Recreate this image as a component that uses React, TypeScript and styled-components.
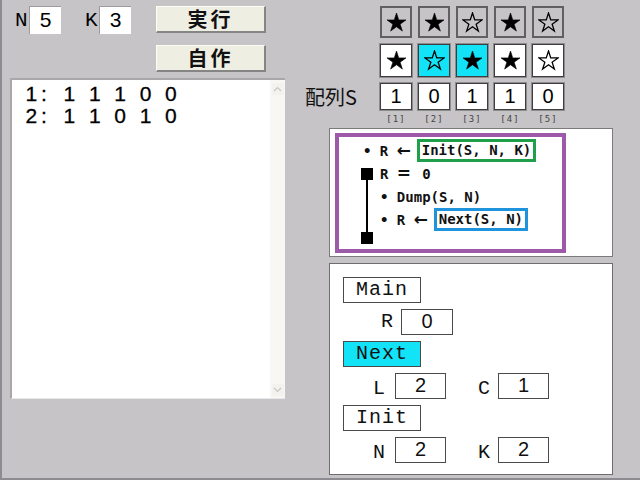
import React, { FC } from "react";
import styled, { createGlobalStyle } from "styled-components";

const GlobalStyle = createGlobalStyle`
  html, body {
    margin: 0;
    padding: 0;
    background: #c6c4c7;
  }
  * {
    box-sizing: border-box;
  }
`;

const UI = `"Liberation Mono", "DejaVu Sans Mono", monospace`;
const DIGITS = `"Liberation Sans", Arial, sans-serif`;
const CODE = `"DejaVu Sans Mono", "Liberation Mono", monospace`;
const JP = `"Noto Sans CJK JP", "Noto Sans", sans-serif`;

const starRow1 = [true, true, false, true, false];
const starRow2 = [true, false, true, true, false];
const cyanRow2 = [false, true, true, false, false];
const values = [1, 0, 1, 1, 0];
const output = ["1: 1 1 1 0 0", "2: 1 1 0 1 0"];

const Star: FC<{ filled: boolean }> = ({ filled }) => (
  <svg width="21" height="21" viewBox="-0.5 -0.5 21 21">
    <polygon
      points="10,0.5 12.25,7.41 19.51,7.41 13.63,11.68 15.88,18.59 10,14.32 4.12,18.59 6.37,11.68 0.49,7.41 7.75,7.41"
      fill={filled ? "#000" : "none"}
      stroke="#000"
      strokeWidth={filled ? 0.6 : 1.3}
      strokeLinejoin="miter"
    />
  </svg>
);

const Chevron: FC<{ up?: boolean }> = ({ up }) => (
  <svg width="9" height="6" viewBox="0 0 9 6">
    <path
      d={up ? "M1 5 L4.5 1.5 L8 5" : "M1 1 L4.5 4.5 L8 1"}
      fill="none"
      stroke="#c9c7c2"
      strokeWidth="1.2"
    />
  </svg>
);

const App: FC = () => {
  return (
    <>
      <GlobalStyle />
      <Frame>
        <LeftColumn>
          <Controls>
            <Params>
              <ParamLabel>N</ParamLabel>
              <ParamBox>5</ParamBox>
              <ParamLabel $spaced>K</ParamLabel>
              <ParamBox>3</ParamBox>
            </Params>
            <Buttons>
              <ActionButton>実行</ActionButton>
              <ActionButton>自作</ActionButton>
            </Buttons>
          </Controls>
          <OutputArea>
            <OutputText>
              {output.map((line) => (
                <OutputLine key={line}>
                  {line.split("").map((ch, i) => (
                    <OutputChar key={i}>{ch}</OutputChar>
                  ))}
                </OutputLine>
              ))}
            </OutputText>
            <ScrollBar>
              <ScrollArrow>
                <Chevron up />
              </ScrollArrow>
              <ScrollArrow>
                <Chevron />
              </ScrollArrow>
            </ScrollBar>
          </OutputArea>
        </LeftColumn>

        <RightColumn>
          <ArrayGrid>
            <span />
            {starRow1.map((filled, i) => (
              <StarCell key={`a${i}`} $row={1}>
                <Star filled={filled} />
              </StarCell>
            ))}
            <span />
            {starRow2.map((filled, i) => (
              <StarCell key={`b${i}`} $row={2} $cyan={cyanRow2[i]}>
                <Star filled={filled} />
              </StarCell>
            ))}
            <ArrayLabel>配列S</ArrayLabel>
            {values.map((v, i) => (
              <ValueCell key={`c${i}`}>{v}</ValueCell>
            ))}
            <span />
            {values.map((_, i) => (
              <IndexLabel key={`d${i}`}>[{i + 1}]</IndexLabel>
            ))}
          </ArrayGrid>

          <CodePanel>
            <Algorithm>
              <CodeLine $indent={24}>
                {"• R "}
                <Arrow>←</Arrow>
                <Mark $color="#21a04b">Init(S, N, K)</Mark>
              </CodeLine>
              <Loop>
                <Bracket>
                  <BracketEnd />
                  <BracketLine />
                  <BracketEnd />
                </Bracket>
                <LoopBody>
                  <CodeLine>
                    {"R "}
                    <Arrow>=</Arrow>
                    {" 0"}
                  </CodeLine>
                  <CodeLine>{"• Dump(S, N)"}</CodeLine>
                  <CodeLine>
                    {"• R "}
                    <Arrow>←</Arrow>
                    <Mark $color="#1f93dc">Next(S, N)</Mark>
                  </CodeLine>
                </LoopBody>
              </Loop>
            </Algorithm>
          </CodePanel>

          <VarPanel>
            <FuncName>Main</FuncName>
            <VarRow $indent={38}>
              <VarLabel $width={20}>R</VarLabel>
              <VarBox $width={52}>0</VarBox>
            </VarRow>
            <FuncName $active>Next</FuncName>
            <VarRow $indent={30} $low>
              <VarLabel $width={22}>L</VarLabel>
              <VarBox $width={51}>2</VarBox>
              <VarLabel $width={20} $gap={32}>
                C
              </VarLabel>
              <VarBox $width={51}>1</VarBox>
            </VarRow>
            <FuncName>Init</FuncName>
            <VarRow $indent={30} $low>
              <VarLabel $width={22}>N</VarLabel>
              <VarBox $width={51}>2</VarBox>
              <VarLabel $width={20} $gap={32}>
                K
              </VarLabel>
              <VarBox $width={51}>2</VarBox>
            </VarRow>
          </VarPanel>
        </RightColumn>
      </Frame>
    </>
  );
};

export default App;

const Frame = styled.div`
  display: flex;
  width: 640px;
  height: 480px;
  background: #c6c4c7;
  border-left: 2px solid #8d8b8f;
  border-bottom: 2px solid #8d8b8f;
  overflow: hidden;
`;

const LeftColumn = styled.div`
  width: 298px;
  padding: 6px 0 0 8px;
  display: flex;
  flex-direction: column;
`;

const Controls = styled.div`
  display: flex;
  align-items: flex-start;
`;

const Params = styled.div`
  display: flex;
  align-items: center;
  height: 28px;
  margin-left: 5px;
`;

const ParamLabel = styled.span<{ $spaced?: boolean }>`
  width: 12px;
  margin-right: 2px;
  margin-left: ${(p) => (p.$spaced ? "24px" : "0")};
  font-family: ${UI};
  font-size: 21px;
  color: #000;
`;

const ParamBox = styled.div`
  width: 32px;
  height: 28px;
  background: #fff;
  border-top: 1px solid #9c9c9c;
  border-left: 1px solid #9c9c9c;
  font-family: ${DIGITS};
  font-size: 21px;
  line-height: 26px;
  text-align: center;
  color: #000;
`;

const Buttons = styled.div`
  display: flex;
  flex-direction: column;
  gap: 12px;
  margin-left: 25px;
`;

const ActionButton = styled.div`
  width: 110px;
  height: 27px;
  background: #efeee2;
  border-top: 1px solid #fdfdf8;
  border-left: 1px solid #fdfdf8;
  border-right: 2px solid #858585;
  border-bottom: 2px solid #858585;
  font-family: ${JP};
  font-weight: 700;
  font-size: 20px;
  line-height: 24px;
  letter-spacing: 3px;
  text-align: center;
  color: #111;
`;

const OutputArea = styled.div`
  display: flex;
  width: 275px;
  height: 321px;
  margin-top: 6px;
  background: #fff;
  border-top: 2px solid #a9a7aa;
  border-left: 2px solid #a9a7aa;
  border-bottom: 1px solid #e8e7e9;
`;

const OutputText = styled.div`
  flex: 1;
  padding: 3px 0 0 13px;
`;

const OutputLine = styled.div`
  display: flex;
  height: 22px;
`;

const OutputChar = styled.span`
  width: 12.7px;
  font-family: ${DIGITS};
  font-size: 21px;
  line-height: 22px;
  text-align: center;
  white-space: pre;
  color: #000;
  -webkit-text-stroke: 0.3px #000;
`;

const ScrollBar = styled.div`
  width: 15px;
  display: flex;
  flex-direction: column;
  justify-content: space-between;
  align-items: center;
  padding: 3px 0 2px;
  background: #f8f7f3;
`;

const ScrollArrow = styled.div`
  width: 12px;
  height: 12px;
  display: flex;
  align-items: center;
  justify-content: center;
  background: #f3f2ee;
`;

const RightColumn = styled.div`
  flex: 1;
  display: flex;
  flex-direction: column;
  padding-top: 6px;
`;

const ArrayGrid = styled.div`
  display: grid;
  grid-template-columns: 74px repeat(5, 32px);
  grid-template-rows: 32px 33px 27px auto;
  column-gap: 6px;
  row-gap: 6px;
`;

const StarCell = styled.div<{ $row: number; $cyan?: boolean }>`
  display: flex;
  align-items: center;
  justify-content: center;
  background: ${(p) => (p.$cyan ? "#13e3f6" : p.$row === 1 ? "#c6c4c7" : "#fff")};
  border: ${(p) => (p.$row === 1 ? "2px solid #606060" : "1px solid #3e3e3e")};
  box-shadow: ${(p) => (p.$row === 1 ? "none" : "0 0 0 1px #8e8c8f")};
`;

const ArrayLabel = styled.div`
  align-self: center;
  padding-left: 5px;
  font-family: ${JP};
  font-size: 20px;
  line-height: 24px;
  color: #111;
`;

const ValueCell = styled.div`
  background: #fff;
  border: 1px solid #3e3e3e;
  box-shadow: 0 0 0 1px #8e8c8f;
  font-family: ${DIGITS};
  font-size: 20px;
  line-height: 25px;
  text-align: center;
  color: #000;
`;

const IndexLabel = styled.div`
  margin-top: -3px;
  font-family: ${CODE};
  font-size: 9px;
  line-height: 12px;
  letter-spacing: 1px;
  text-align: center;
  color: #444;
`;

const CodePanel = styled.div`
  width: 284px;
  height: 129px;
  margin: 3px 0 0 29px;
  padding: 4px 0 0 5px;
  background: #fff;
  border: 1px solid #7c7a7d;
`;

const Algorithm = styled.div`
  width: 231px;
  height: 120px;
  padding-top: 2px;
  border: 4px solid #9d5aa8;
`;

const CodeLine = styled.div<{ $indent?: number }>`
  display: flex;
  align-items: center;
  height: 23px;
  padding-left: ${(p) => p.$indent ?? 0}px;
  font-family: ${CODE};
  font-weight: 700;
  font-size: 14px;
  white-space: pre;
  color: #111;
`;

const Arrow = styled.span`
  display: inline-block;
  width: 17px;
  font-family: "DejaVu Sans", sans-serif;
  font-weight: 700;
  font-size: 17px;
  line-height: 17px;
`;

const Mark = styled.span<{ $color: string }>`
  margin-left: 3px;
  padding: 0 2px;
  line-height: 17px;
  border: 3px solid ${(p) => p.$color};
`;

const Loop = styled.div`
  display: flex;
  margin-left: 22px;
`;

const Bracket = styled.div`
  width: 12px;
  display: flex;
  flex-direction: column;
  align-items: center;
  padding-top: 6px;
`;

const BracketEnd = styled.div`
  width: 12px;
  height: 12px;
  flex-shrink: 0;
  background: #000;
`;

const BracketLine = styled.div`
  width: 2px;
  flex: 1;
  background: #000;
`;

const LoopBody = styled.div`
  margin-left: 7px;
  padding-bottom: 13px;
`;

const VarPanel = styled.div`
  width: 284px;
  height: 212px;
  margin: 6px 0 0 29px;
  padding: 13px 0 0 13px;
  display: flex;
  flex-direction: column;
  gap: 6px;
  background: #fff;
  border: 1px solid #6f6d70;
`;

const FuncName = styled.div<{ $active?: boolean }>`
  width: 78px;
  height: 26px;
  background: ${(p) => (p.$active ? "#13e3f6" : "#fff")};
  border: 1px solid #4a4a4a;
  font-family: ${UI};
  font-size: 20px;
  line-height: 24px;
  letter-spacing: 1px;
  text-align: center;
  color: #111;
`;

const VarRow = styled.div<{ $indent: number; $low?: boolean }>`
  display: flex;
  align-items: ${(p) => (p.$low ? "flex-end" : "center")};
  height: 26px;
  padding-left: ${(p) => p.$indent}px;
`;

const VarLabel = styled.span<{ $width: number; $gap?: number }>`
  width: ${(p) => p.$width}px;
  margin-left: ${(p) => p.$gap ?? 0}px;
  font-family: ${UI};
  font-size: 20px;
  line-height: 20px;
  color: #111;
`;

const VarBox = styled.div<{ $width: number }>`
  width: ${(p) => p.$width}px;
  height: 26px;
  background: #fff;
  border: 1px solid #4a4a4a;
  font-family: ${DIGITS};
  font-size: 20px;
  line-height: 23px;
  text-align: center;
  color: #111;
`;
